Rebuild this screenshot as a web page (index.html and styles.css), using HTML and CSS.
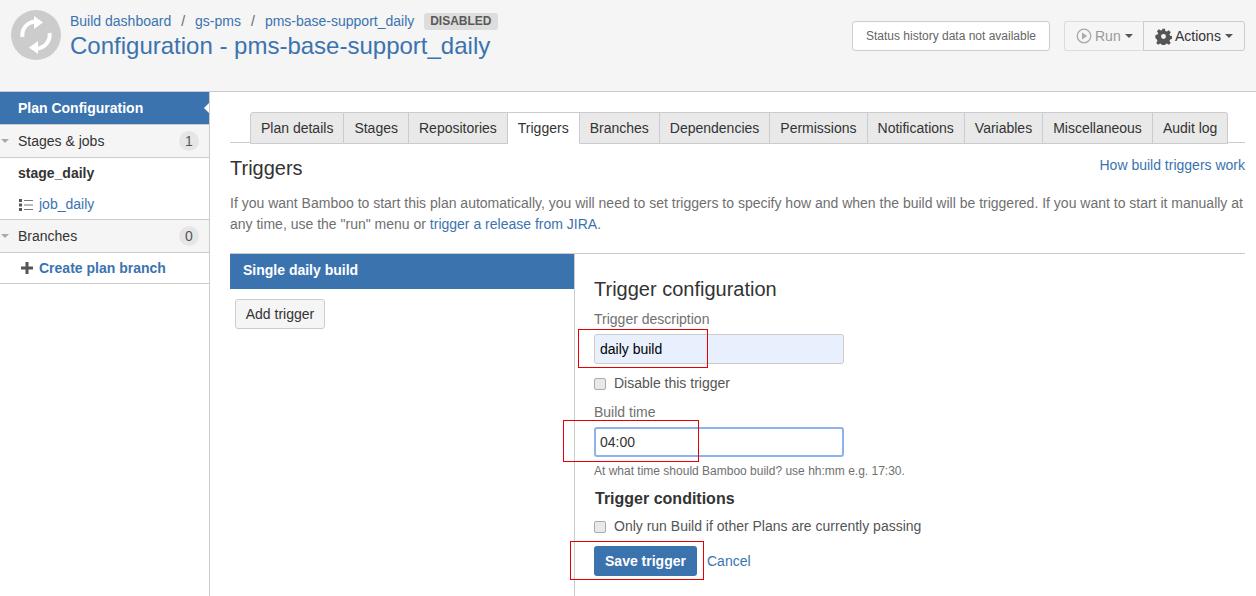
FILE: index.html
```html
<!DOCTYPE html>
<html lang="en">
<head>
  <meta charset="UTF-8">
  <meta name="viewport" content="width=device-width, initial-scale=1.0">
  <title>Configuration - pms-base-support_daily</title>
  <link rel="stylesheet" href="styles.css">
</head>
<body>
  <!-- Page header -->
  <header class="page-header">
    <div class="avatar">
      <svg width="50" height="50" viewBox="0 0 50 50">
        <circle cx="25" cy="25" r="25" fill="#ccc"/>
        <path d="M11.500 27A13.500 13.500 0 0 1 24 11.500" fill="none" stroke="#fff" stroke-width="4"/>
        <path d="M38.500 23A13.500 13.500 0 0 1 26 38.500" fill="none" stroke="#fff" stroke-width="4"/>
        <path d="M23 6l9 6.500-9 6.500z" fill="#fff"/>
        <path d="M27 44l-9-6.500 9-6.500z" fill="#fff"/>
      </svg>
    </div>
    <div class="titles">
      <div class="crumbs">
        <a href="#">Build dashboard</a><span class="sep">/</span><a href="#">gs-pms</a><span class="sep">/</span><a href="#">pms-base-support_daily</a>
        <span class="lozenge">DISABLED</span>
      </div>
      <h1>Configuration - pms-base-support_daily</h1>
    </div>
    <div class="status-box">Status history data not available</div>
    <div class="btn-group">
      <div class="head-btn run-btn">
        <svg width="16" height="16" viewBox="0 0 16 16">
          <circle cx="8" cy="8" r="6.800" fill="none" stroke="#aaa" stroke-width="1.300"/>
          <path d="M6 4.500l5.200 3.500L6 11.500z" fill="#aaa"/>
        </svg>
        Run <span class="caret"></span>
      </div>
      <div class="head-btn">
        <svg width="17" height="17" viewBox="0 0 24 24">
          <path fill="#555" fill-rule="evenodd" d="M10 1h4l.7 3.200 2 .8 2.800-1.800 2.800 2.800-1.800 2.800.8 2 3.200.7v4l-3.200.7-.8 2 1.800 2.800-2.800 2.800-2.800-1.800-2 .8-.7 3.200h-4l-.7-3.200-2-.8-2.800 1.800-2.800-2.800 1.800-2.800-.8-2L.5 14v-4l3.200-.7.8-2L2.700 4.500l2.800-2.800 2.800 1.800 2-.8zM12 8.500a3.500 3.500 0 1 0 0 7 3.500 3.500 0 0 0 0-7z"/>
        </svg>
        Actions <span class="caret"></span>
      </div>
    </div>
  </header>

  <div class="layout">
    <!-- Left menu -->
    <nav class="sidebar">
      <div class="side-active">Plan Configuration</div>
      <div class="side-head">
        <span class="side-arrow"></span><span class="side-title">Stages &amp; jobs</span><span class="count">1</span>
      </div>
      <div class="side-list">
        <div class="stage-name">stage_daily</div>
        <a class="job-link" href="#">
          <svg width="15" height="12" viewBox="0 0 15 12">
            <path fill="#555" d="M0 0h3v3H0zM0 4.500h3v3H0zM0 9h3v3H0z"/>
            <path fill="#777" d="M5 1h9v1H5zM5 5.500h9v1H5zM5 10h9v1H5z"/>
          </svg>
          job_daily
        </a>
      </div>
      <div class="side-head">
        <span class="side-arrow"></span><span class="side-title">Branches</span><span class="count">0</span>
      </div>
      <div class="side-create">
        <svg width="12" height="12" viewBox="0 0 12 12"><path fill="#555" d="M4.500 0h3v4.500H12v3H7.500V12h-3V7.500H0v-3h4.500z"/></svg>
        <a href="#">Create plan branch</a>
      </div>
    </nav>

    <!-- Main content -->
    <main class="content">
      <ul class="tabs">
        <li>Plan details</li>
        <li>Stages</li>
        <li>Repositories</li>
        <li class="current">Triggers</li>
        <li>Branches</li>
        <li>Dependencies</li>
        <li>Permissions</li>
        <li>Notifications</li>
        <li>Variables</li>
        <li>Miscellaneous</li>
        <li>Audit log</li>
      </ul>

      <div class="section-head">
        <h2>Triggers</h2>
        <a href="#">How build triggers work</a>
      </div>
      <p class="intro">If you want Bamboo to start this plan automatically, you will need to set triggers to specify how and when the build will be triggered. If you want to start it manually at any time, use the "run" menu or <a href="#">trigger a release from JIRA</a>.</p>

      <div class="split">
        <div class="trigger-list">
          <div class="trigger-item">Single daily build</div>
          <button class="add-btn" type="button">Add trigger</button>
        </div>
        <form class="trigger-form">
          <h3>Trigger configuration</h3>
          <label class="field-label" for="desc">Trigger description</label>
          <input class="text-input filled" id="desc" type="text" value="daily build">
          <label class="check-row"><span class="fake-check"></span>Disable this trigger</label>
          <label class="field-label build-label" for="time">Build time</label>
          <input class="text-input focused" id="time" type="text" value="04:00">
          <div class="help">At what time should Bamboo build? use hh:mm e.g. 17:30.</div>
          <h4>Trigger conditions</h4>
          <label class="check-row"><span class="fake-check"></span>Only run Build if other Plans are currently passing</label>
          <div class="form-actions">
            <button class="save-btn" type="button">Save trigger</button>
            <a href="#">Cancel</a>
          </div>
        </form>
      </div>
    </main>
  </div>

  <!-- Red annotation boxes drawn over the screenshot -->
  <div class="mark mark-desc"></div>
  <div class="mark mark-time"></div>
  <div class="mark mark-save"></div>
</body>
</html>
```

FILE: styles.css
```css
html, body {
  margin: 0;
  height: 596px;
  overflow: hidden;
}
body {
  position: relative;
  font-family: "Liberation Sans", Arial, sans-serif;
  font-size: 14px;
  color: #333;
  background-color: #fff;
}
a {
  color: #3b73af;
  text-decoration: none;
}

/* header */
.page-header {
  display: flex;
  height: 91px;
  box-sizing: content-box;
  background-color: #f5f5f5;
  border-bottom: 1px solid #ccc;
  padding: 0 11px;
}
.avatar {
  width: 50px;
  height: 50px;
  margin-top: 10px;
}
.titles {
  margin-left: 9px;
  flex: 1;
}
.crumbs {
  margin-top: 13px;
  height: 17px;
  line-height: 17px;
  white-space: nowrap;
}
.sep {
  color: #666;
  margin: 0 10px;
}
.lozenge {
  display: inline-block;
  margin-left: 6px;
  padding: 0 6px;
  height: 17px;
  line-height: 17px;
  font-size: 12px;
  font-weight: bold;
  color: #595959;
  background-color: #ddd;
  border-radius: 3px;
  vertical-align: top;
}
h1 {
  margin: 2px 0 0;
  font-size: 24px;
  font-weight: normal;
  line-height: 28px;
  color: #3b73af;
}
.status-box {
  width: 198px;
  height: 30px;
  box-sizing: border-box;
  margin-top: 21px;
  line-height: 28px;
  text-align: center;
  font-size: 12px;
  color: #666;
  background-color: #fff;
  border: 1px solid #ccc;
  border-radius: 3px;
}
.btn-group {
  display: flex;
  height: 30px;
  margin: 21px 0 0 14px;
}
.head-btn {
  display: flex;
  align-items: center;
  gap: 3px;
  box-sizing: border-box;
  width: 102px;
  height: 30px;
  padding-left: 11px;
  border: 1px solid #ccc;
  border-radius: 0 3px 3px 0;
  color: #333;
}
.run-btn {
  width: 79px;
  border-right: 0;
  border-color: #ddd;
  border-radius: 3px 0 0 3px;
  color: #999;
}
.caret {
  width: 0;
  height: 0;
  margin-left: 1px;
  border-left: 4px solid transparent;
  border-right: 4px solid transparent;
  border-top: 4px solid #555;
}

/* sidebar */
.layout {
  display: flex;
  height: 504px;
}
.sidebar {
  width: 209px;
  border-right: 1px solid #ccc;
  flex-shrink: 0;
}
.side-active {
  position: relative;
  height: 32px;
  line-height: 32px;
  padding-left: 18px;
  font-weight: bold;
  color: #fff;
  background-color: #3b73af;
  border-bottom: 1px solid #ccc;
}
.side-active::after {
  content: "";
  position: absolute;
  right: 0;
  top: 11px;
  border-top: 5px solid transparent;
  border-bottom: 5px solid transparent;
  border-right: 5px solid #fff;
}
.side-head {
  display: flex;
  align-items: center;
  height: 32px;
  background-color: #f5f5f5;
  border-bottom: 1px solid #ccc;
  padding: 0 10px 0 1px;
}
.side-arrow {
  width: 0;
  height: 0;
  margin-right: 8px;
  border-left: 4.500px solid transparent;
  border-right: 4.500px solid transparent;
  border-top: 4.500px solid #aaa;
}
.side-title {
  flex: 1;
  padding-left: 1px;
}
.count {
  width: 20px;
  height: 20px;
  line-height: 20px;
  text-align: center;
  font-size: 14px;
  color: #555;
  background-color: #e6e6e6;
  border-radius: 50%;
}
.side-list {
  height: 61px;
  border-bottom: 1px solid #ccc;
}
.stage-name {
  padding: 7px 0 0 18px;
  line-height: 17px;
  font-weight: bold;
}
.job-link {
  display: flex;
  align-items: center;
  gap: 5px;
  margin-top: 14px;
  padding-left: 19px;
  line-height: 17px;
}
.side-create {
  display: flex;
  align-items: center;
  gap: 6px;
  height: 30px;
  padding-left: 21px;
  border-bottom: 1px solid #ccc;
  font-weight: bold;
}

/* main column */
.content {
  flex: 1;
  padding: 20px 11px 0 20px;
  min-width: 0;
}
.tabs {
  display: flex;
  list-style: none;
  margin: 0;
  padding: 0 0 0 20px;
  height: 30px;
  border-bottom: 1px solid #ccc;
}
.tabs li {
  height: 30px;
  line-height: 31px;
  padding: 0 10px;
  background-color: #e9e9e9;
  border: 1px solid #ccc;
  border-left: 0;
  color: #333;
}
.tabs li:first-child {
  border-left: 1px solid #ccc;
  border-radius: 3px 0 0 0;
}
.tabs li:last-child {
  border-radius: 0 3px 0 0;
}
.tabs li.current {
  background-color: #fff;
  border-bottom-color: #fff;
}
.section-head {
  display: flex;
  justify-content: space-between;
  margin-top: 11px;
  height: 28px;
}
h2 {
  margin: 0;
  font-size: 20px;
  font-weight: normal;
  line-height: 28px;
}
.section-head a {
  line-height: 22px;
}
.intro {
  margin: 11px 0 0;
  height: 42px;
  line-height: 20.500px;
  color: #707070;
}
.split {
  display: flex;
  margin-top: 18px;
  border-top: 1px solid #ccc;
  height: 343px;
}
.trigger-list {
  width: 344px;
  flex-shrink: 0;
  border-right: 1px solid #ccc;
}
.trigger-item {
  height: 35px;
  line-height: 33px;
  padding-left: 13px;
  font-weight: bold;
  color: #fff;
  background-color: #3b73af;
}
.add-btn {
  display: block;
  width: 90px;
  height: 30px;
  margin: 10px 0 0 5px;
  padding: 0;
  font: 14px "Liberation Sans", Arial, sans-serif;
  color: #333;
  background-color: #f5f5f5;
  border: 1px solid #ccc;
  border-radius: 3px;
}

/* trigger form */
.trigger-form {
  padding-left: 19px;
  flex: 1;
}
h3 {
  margin: 23px 0 0;
  font-size: 20px;
  font-weight: normal;
  line-height: 24px;
}
.field-label {
  display: block;
  margin-top: 10px;
  line-height: 17px;
  color: #707070;
}
.text-input {
  display: block;
  box-sizing: border-box;
  width: 250px;
  height: 30px;
  margin-top: 6px;
  padding: 0 5px;
  font: 14px "Liberation Sans", Arial, sans-serif;
  border: 1px solid #ccc;
  border-radius: 3px;
  outline: none;
}
.filled {
  color: #000;
  background-color: #e8f0fe;
}
.focused {
  color: #333;
  border: 2px solid #8eb2f0;
  padding: 0 4px;
  margin-top: 6px;
}
.check-row {
  display: flex;
  align-items: center;
  margin-top: 11px;
  height: 17px;
  line-height: 17px;
  color: #555;
}
.fake-check {
  box-sizing: border-box;
  width: 12px;
  height: 12px;
  margin-right: 8px;
  background-color: #e9e9e9;
  border: 1px solid #aaa;
  border-radius: 2px;
}
.build-label {
  margin-top: 12px;
}
.help {
  margin-top: 7px;
  font-size: 12px;
  line-height: 14px;
  color: #707070;
}
h4 {
  margin: 11px 0 0 1px;
  font-size: 16px;
  line-height: 20px;
  color: #333;
}
h4 + .check-row {
  margin-top: 9px;
}
.form-actions {
  display: flex;
  align-items: center;
  gap: 10px;
  margin-top: 11px;
}
.save-btn {
  width: 103px;
  height: 30px;
  padding: 0;
  font: bold 14px "Liberation Sans", Arial, sans-serif;
  color: #fff;
  background-color: #3b73af;
  border: 0;
  border-radius: 3px;
}

/* red annotations */
.mark {
  position: absolute;
  box-sizing: border-box;
  border: 1px solid #e60000;
}
.mark-desc {
  left: 578px;
  top: 329px;
  width: 130px;
  height: 39px;
}
.mark-time {
  left: 563px;
  top: 420px;
  width: 136px;
  height: 42px;
}
.mark-save {
  left: 570px;
  top: 541px;
  width: 134px;
  height: 39px;
}
```
